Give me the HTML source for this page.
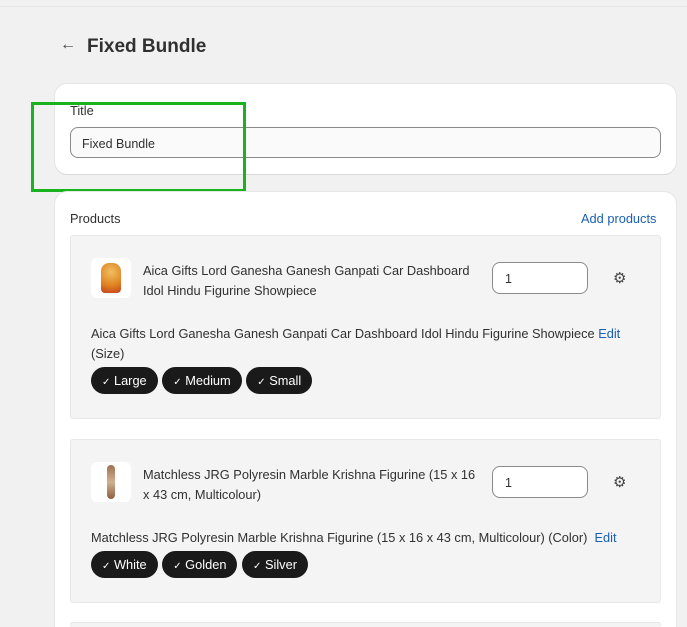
<!DOCTYPE html>
<html><head><style>
*{box-sizing:border-box;margin:0;padding:0}
html,body{width:687px;height:627px;overflow:hidden}
body{background:#f1f1f1;font-family:"Liberation Sans",sans-serif;color:#303030;position:relative;font-size:12.8px}
.a{position:absolute}
.card{background:#fff;border-radius:12px;box-shadow:0 1px 0 #d8d8d8,0 0 0 1px #e6e6e6}
.box{background:#f4f4f4;border:1px solid #e8e8e8;border-radius:3px}
.qty{background:#fff;border:1px solid #8a8a8a;border-radius:8px;width:96px;height:32px;padding:9px 12px;font-size:12.5px}
.pill{display:inline-block;background:#1a1a1a;color:#fff;border-radius:14px;height:27px;line-height:27px;padding:0 11px;font-size:12.8px;margin-right:1px}
.pill i{font-style:normal;font-size:10px}
.edit{color:#1a5fb4}
</style></head><body>
<div class="a" style="left:0;top:6px;width:687px;height:1px;background:#e6e6e6"></div>
<div class="a" style="left:60px;top:36px;font-size:16px;color:#444">&#8592;</div>
<div class="a" style="left:87px;top:36px;font-size:19px;font-weight:bold;color:#303030">Fixed Bundle</div>

<div class="a card" style="left:55px;top:84px;width:621px;height:90px"></div>
<div class="a" style="left:70px;top:103px">Title</div>
<div class="a" style="left:70px;top:127px;width:591px;height:31px;border:1px solid #8a8a8a;border-radius:8px;background:#fafafa;padding:9px 11px;font-size:12.5px">Fixed Bundle</div>
<div class="a" style="left:31px;top:102px;width:215px;height:90px;border:3px solid #19b31e"></div>

<div class="a card" style="left:55px;top:192px;width:621px;height:435px;border-radius:12px 12px 0 0"></div>
<div class="a" style="left:70px;top:211px">Products</div>
<div class="a edit" style="left:581px;top:211px">Add products</div>

<div class="a box" style="left:70px;top:235px;width:591px;height:184px"></div>
<div class="a" style="left:91px;top:258px;width:40px;height:40px;background:#fff;border-radius:6px"><div style="margin:5px 10px;width:20px;height:30px;background:radial-gradient(circle at 50% 30%,#f0c060,#e08020 60%,#c04020);border-radius:8px 8px 4px 4px"></div></div>
<div class="a" style="left:143px;top:261px;width:340px;line-height:20px">Aica Gifts Lord Ganesha Ganesh Ganpati Car Dashboard Idol Hindu Figurine Showpiece</div>
<div class="a qty" style="left:492px;top:262px">1</div>
<div class="a" style="left:613px;top:269px;font-size:15px;color:#444">&#9881;</div>
<div class="a" style="left:91px;top:324px;line-height:20px;width:560px">Aica Gifts Lord Ganesha Ganesh Ganpati Car Dashboard Idol Hindu Figurine Showpiece <span class="edit">Edit</span><br>(Size)</div>
<div class="a" style="left:91px;top:367px;white-space:nowrap"><span class="pill"><i>&#10003;</i> Large</span> <span class="pill"><i>&#10003;</i> Medium</span> <span class="pill"><i>&#10003;</i> Small</span></div>

<div class="a box" style="left:70px;top:439px;width:591px;height:164px"></div>
<div class="a" style="left:91px;top:462px;width:40px;height:40px;background:#fff;border-radius:6px"><div style="margin:3px 16px;width:8px;height:34px;background:linear-gradient(#a07050,#d0b090,#906040);border-radius:4px"></div></div>
<div class="a" style="left:143px;top:465px;width:340px;line-height:20px">Matchless JRG Polyresin Marble Krishna Figurine (15 x 16 x 43 cm, Multicolour)</div>
<div class="a qty" style="left:492px;top:466px">1</div>
<div class="a" style="left:613px;top:473px;font-size:15px;color:#444">&#9881;</div>
<div class="a" style="left:91px;top:528px;line-height:20px;white-space:nowrap">Matchless JRG Polyresin Marble Krishna Figurine (15 x 16 x 43 cm, Multicolour) (Color) &nbsp;<span class="edit">Edit</span></div>
<div class="a" style="left:91px;top:551px;white-space:nowrap"><span class="pill"><i>&#10003;</i> White</span> <span class="pill"><i>&#10003;</i> Golden</span> <span class="pill"><i>&#10003;</i> Silver</span></div>

<div class="a box" style="left:70px;top:622px;width:591px;height:5px;border-bottom:none"></div>
</body></html>
